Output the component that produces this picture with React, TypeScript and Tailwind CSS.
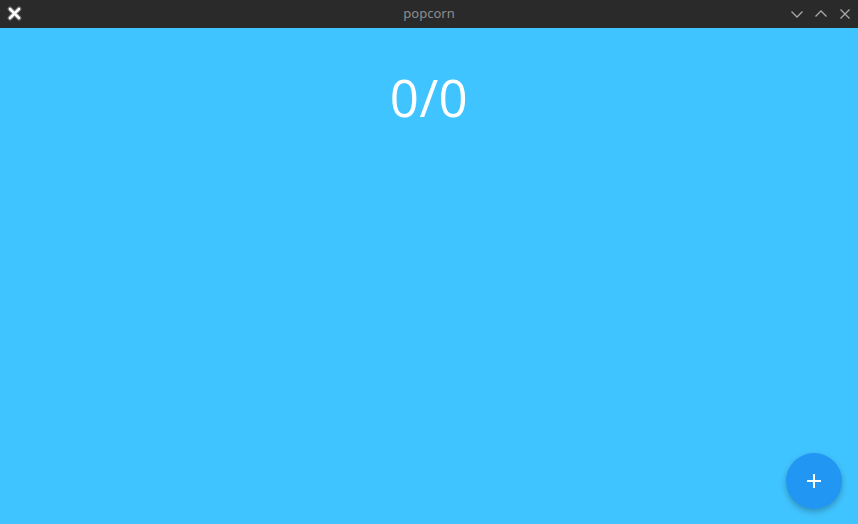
import React from "react";

export default function App() {
  return (
    <div className="w-[858px] h-[524px] flex flex-col overflow-hidden" style={{ fontFamily: '"Open Sans", "Noto Sans", sans-serif' }}>
      <div className="h-[28px] bg-[#2a2a2a] flex items-center relative shrink-0">
        <div className="absolute left-[6px] top-[5px] w-[17px] h-[17px]">
          <svg width="17" height="17" viewBox="0 0 17 17">
            <path d="M4 4 L13 13 M13 4 L4 13" stroke="#6a6a6a" strokeWidth="5" strokeLinecap="round" />
            <path d="M4 4 L13 13 M13 4 L4 13" stroke="#ffffff" strokeWidth="2.6" strokeLinecap="round" />
          </svg>
        </div>
        <div className="flex-1 text-center text-[13px] text-[#8e8e8e]" style={{ fontFamily: '"Noto Sans", sans-serif' }}>
          popcorn
        </div>
        <div className="absolute right-[6px] top-0 h-[28px] flex items-center gap-[10px]">
          <svg width="14" height="14" viewBox="0 0 14 14">
            <path d="M1.5 4.5 L7 10 L12.5 4.5" stroke="#a8a8a8" strokeWidth="1.3" fill="none" />
          </svg>
          <svg width="14" height="14" viewBox="0 0 14 14">
            <path d="M1.5 9.5 L7 4 L12.5 9.5" stroke="#a8a8a8" strokeWidth="1.3" fill="none" />
          </svg>
          <svg width="14" height="14" viewBox="0 0 14 14">
            <path d="M2.5 2.5 L11.5 11.5 M11.5 2.5 L2.5 11.5" stroke="#a8a8a8" strokeWidth="1.3" fill="none" />
          </svg>
        </div>
      </div>
      <div className="flex-1 bg-[#40c4ff] relative flex flex-col items-center">
        <div className="mt-[37px] text-[51px] leading-[65px] text-white tracking-[0.5px]">0/0</div>
        <button className="absolute right-[16px] bottom-[15px] w-[56px] h-[56px] rounded-full bg-[#2196f3] flex items-center justify-center shadow-[0_3px_6px_rgba(0,0,0,0.25)]">
          <svg width="16" height="16" viewBox="0 0 16 16">
            <path d="M8 1 V15 M1 8 H15" stroke="#ffffff" strokeWidth="2" />
          </svg>
        </button>
      </div>
    </div>
  );
}
